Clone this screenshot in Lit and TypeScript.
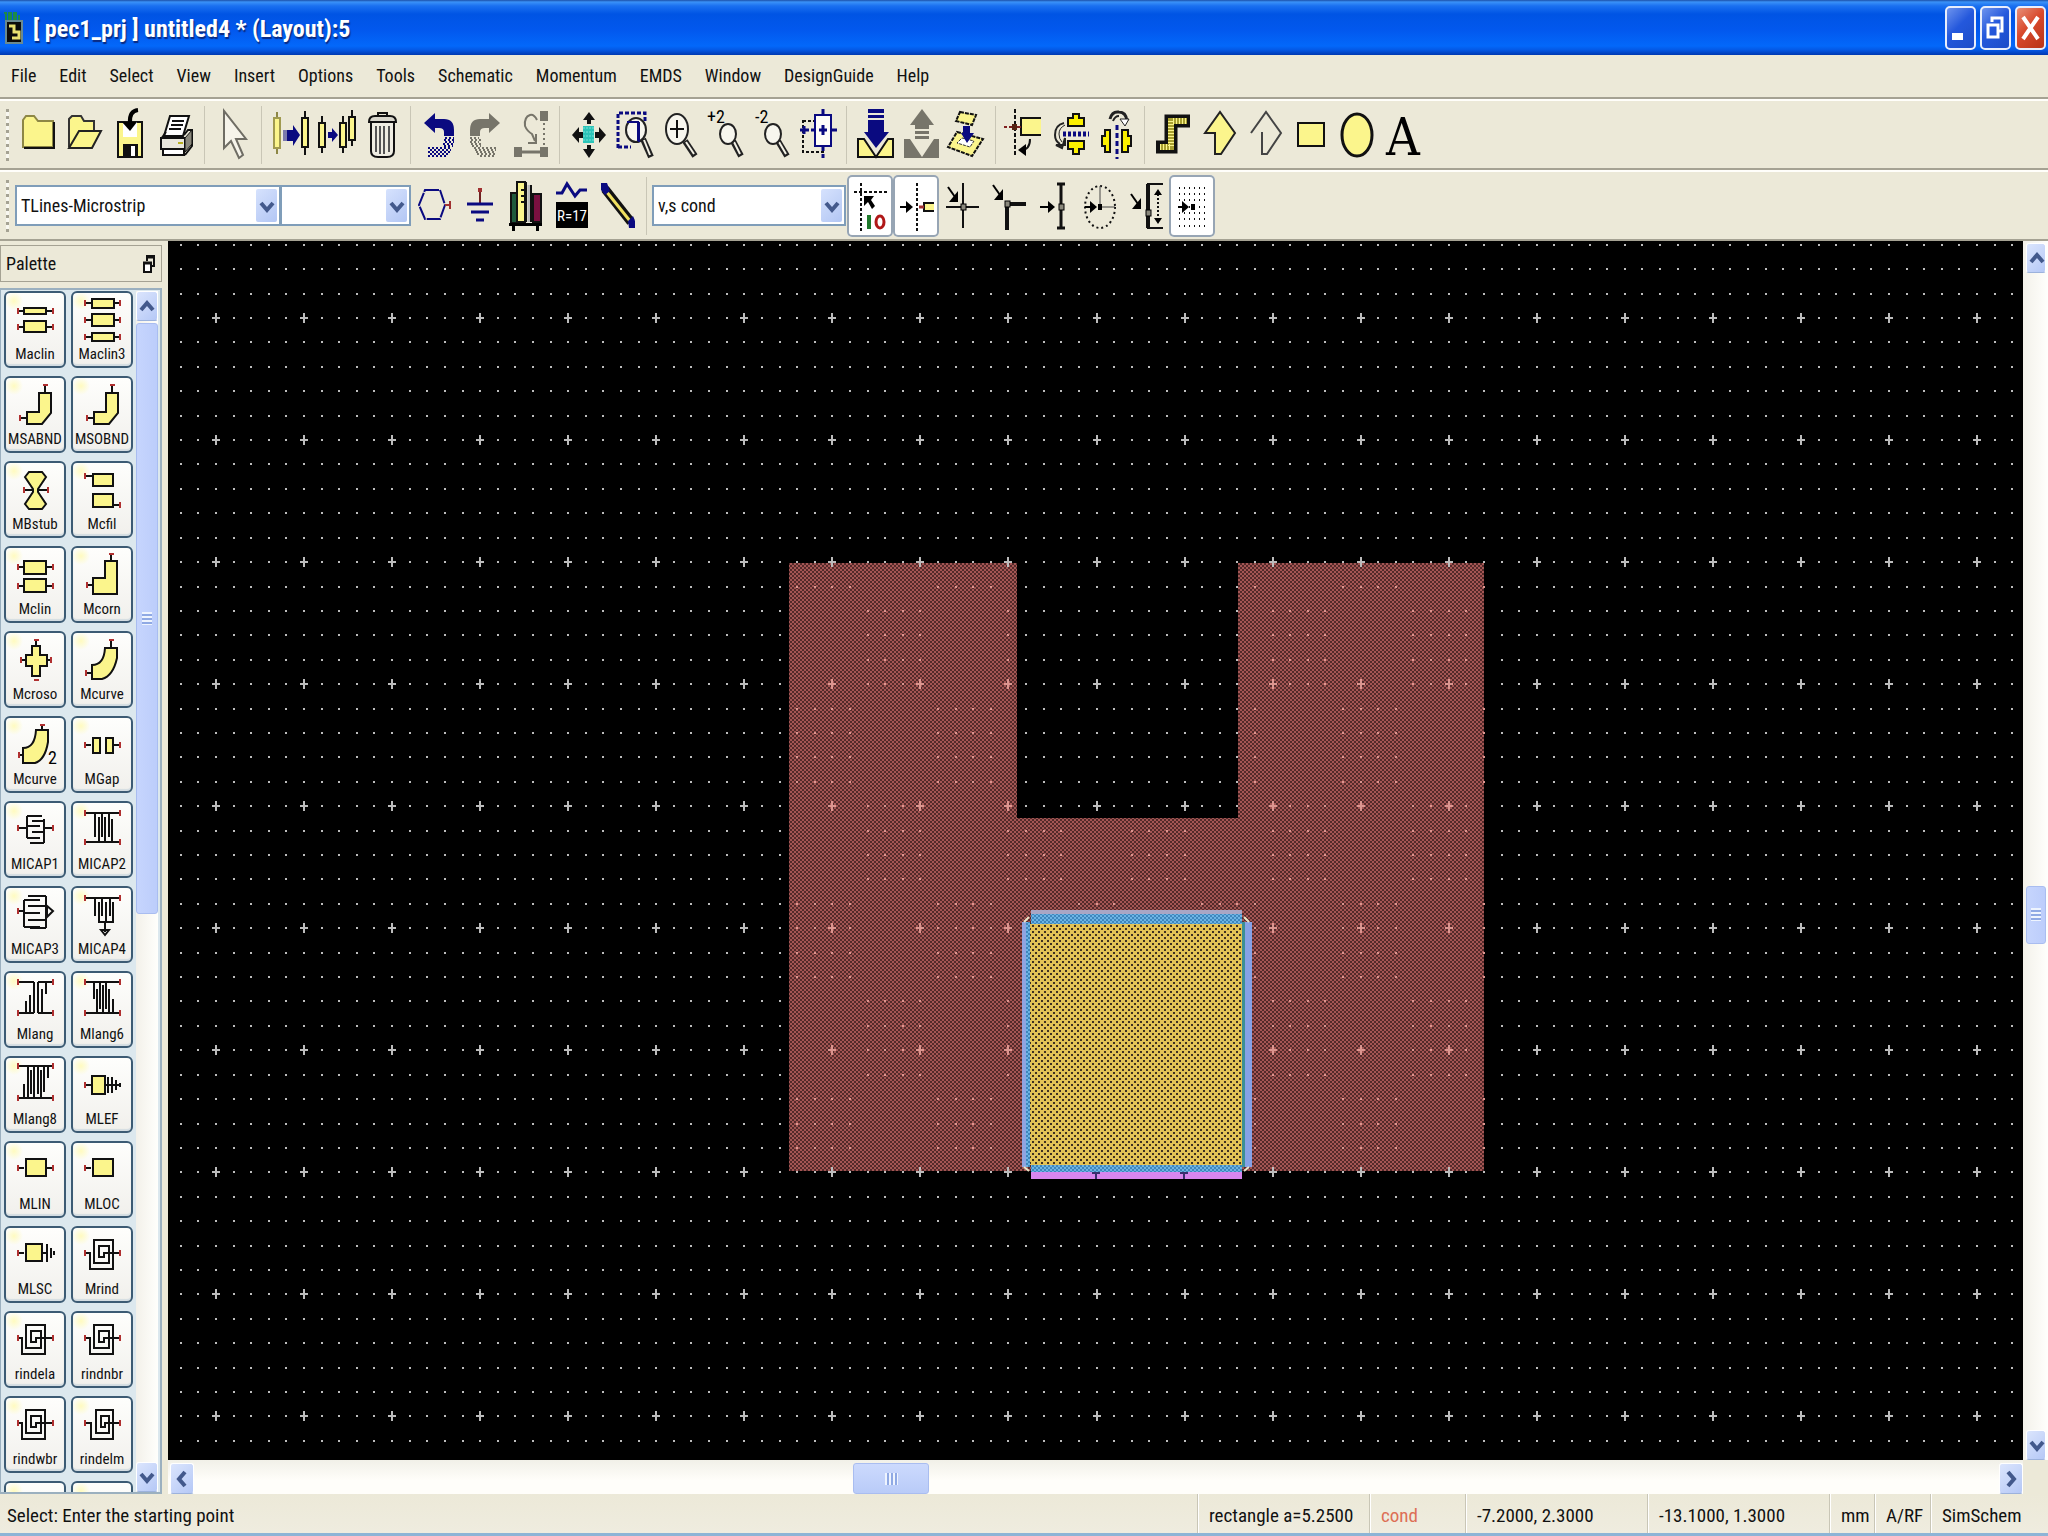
import { LitElement, html, svg, css } from "lit";
import { customElement, property } from "lit/decorators.js";

const Y = "#fbf58c";
const N = "#0a0a80";
const G = "#77756a";

/* ---------- toolbar icons, drawn on a 46 x 60 field ---------- */
const lens = (cx: number, cy: number, rx: number, ry: number, hx: number, hy: number) => svg`
  <path d="M${cx + rx - 3} ${cy + ry - 3} L${hx} ${hy}" stroke="#222" stroke-width="6"/>
  <path d="M${cx + rx - 2} ${cy + ry - 2} L${hx - 1} ${hy - 2}" stroke="#f4f2e6" stroke-width="2"/>
  <ellipse cx=${cx} cy=${cy} rx=${rx} ry=${ry} fill="#f7f6ee" stroke="#222" stroke-width="2"/>`;
const arrowR = (x: number, y: number, len: number) => svg`
  <path d="M${x} ${y} h${len - 6}" stroke="#000" stroke-width="2"/>
  <path d="M${x + len - 7} ${y - 6} v12 l7 -6z" fill="#000"/>`;
const arrowD = (x: number, y: number) => svg`
  <path d="M${x} ${y} l7 10" stroke="#000" stroke-width="2"/>
  <path d="M${x + 10} ${y + 4} v11 h-9z" fill="#000"/>`;
const node = (x: number, y: number) => svg`<rect x=${x - 2} y=${y - 3} width="5" height="6" fill="#8a887c" stroke="#000" stroke-width="1"/>`;

const ICONS: Record<string, unknown> = {
  folder: svg`<path d="M8 42V15l3-4h8l4 5h15v26z" fill=${Y} stroke="#8d8745" stroke-width="2"/><path d="M9 43H39V17" fill="none" stroke="#111" stroke-width="2"/>`,
  open: svg`<path d="M8 42V14l3-3h9l3 5h10v10" fill=${Y} stroke="#333" stroke-width="2"/><path d="M8 43L18 26H40L31 43z" fill=${Y} stroke="#222" stroke-width="2"/>`,
  save: svg`<rect x="11" y="17" width="24" height="35" fill=${Y} stroke="#111" stroke-width="2"/><rect x="16" y="17" width="14" height="15" fill="#fff"/><rect x="16" y="39" width="15" height="13" fill="#111"/><rect x="24" y="41" width="4" height="10" fill="#fff"/><path d="M31 5q-9 1-8 13" fill="none" stroke="#000" stroke-width="4"/><path d="M15 17h15l-7 9z"/>`,
  print: svg`<path d="M17 11H36L30 31H11z" fill="#fff" stroke="#111" stroke-width="2"/><path d="M19 16h12M18 20h12M16 24h12" stroke="#111" stroke-width="2"/><path d="M8 34l5-7M31 30l4-5h4v16l-7 9" fill="none" stroke="#111" stroke-width="2"/><path d="M8 33H32V44H8z" fill="#e9e7dc" stroke="#111" stroke-width="2"/><path d="M32 33l7-8v14l-7 8z" fill="#8a887c" stroke="#111"/><path d="M10 44h21v6H10z" fill="#fff" stroke="#111" stroke-width="2"/><path d="M25 38h5" stroke="#b8b020" stroke-width="2"/>`,
  pointer: svg`<path d="M14 6V43l7-7 8 17 4-3-7-16h10z" fill="#f6f4ea" stroke="#6f6d64" stroke-width="2"/>`,
  swap1: svg`<path d="M10 7V49" stroke="#8d8745" stroke-width="2"/><rect x="7" y="13" width="6" height="30" fill=${Y} stroke="#a09a50" stroke-width="2"/><path d="M17 25v11M19 25v11" stroke=${N}/><path d="M20 25h6v-5l7 10-7 11v-5h-6z" fill=${N}/><path d="M38 6V50" stroke="#111" stroke-width="2"/><rect x="35" y="13" width="6" height="29" fill=${Y} stroke="#111" stroke-width="2"/>`,
  swap2: svg`<path d="M9 11V48M30 11V48M39 5V41" stroke="#111" stroke-width="2"/><rect x="6" y="18" width="6" height="24" fill=${Y} stroke="#111" stroke-width="2"/><rect x="27" y="18" width="6" height="24" fill=${Y} stroke="#111" stroke-width="2"/><rect x="36" y="12" width="6" height="23" fill=${Y} stroke="#111" stroke-width="2"/><path d="M15 27h4v-4l6 7-6 7v-4h-4z" fill=${N}/>`,
  trash: svg`<path d="M19 11V8h9v3" fill="none" stroke="#111" stroke-width="2"/><path d="M10 17q0-6 6-6h15q6 0 6 6z" fill="#d8d6cb" stroke="#111" stroke-width="2"/><path d="M12 17H35V46q0 6-7 6H19q-7 0-7-6z" fill="#efede2" stroke="#111" stroke-width="2"/><path d="M17 21V47M21 21V49M25 21V49M30 21V47" stroke="#555" stroke-width="2"/>`,
  undo: svg`<path d="M8 18L19 8v6h9q10 0 10 11v6H28v-4q0-4-5-4h-4v5z" fill=${N}/><g stroke=${N} stroke-width="2" stroke-dasharray="2 2"><path d="M29 33h9M28 35h10M29 37h9M27 39h11M28 41h9M12 43h24M14 45h21M12 47h22M14 49h18M12 51h18"/></g>`,
  redo: svg`<path d="M38 18L27 8v6h-9q-10 0-10 11v6H18v-4q0-4 5-4h4v5z" fill=${G}/><g stroke=${G} stroke-width="2" stroke-dasharray="2 2"><path d="M8 33h9M9 35h10M8 37h9M9 39h11M10 41h9M12 43h22M13 45h21M14 47h20M15 49h19M18 51h16"/></g>`,
  route: svg`<g fill=${G}><rect x="32" y="6" width="8" height="10"/><rect x="6" y="42" width="8" height="10"/><rect x="32" y="42" width="8" height="10"/></g><path d="M14 47H32" stroke=${G} stroke-width="3"/><path d="M36 18V40" stroke=${G} stroke-width="2" stroke-dasharray="2 3"/><path d="M29 15q-3-6-7-5-6 2-5 11 2 5 7 8l3 7M20 38h8v-9" fill="none" stroke=${G} stroke-width="2"/>`,
  pan: svg`<rect x="18" y="21" width="11" height="17" fill="#2cc4b8"/><path d="M19 22v16M22 22v16M25 22v16M28 22v16" stroke="#79e0d8" stroke-dasharray="2 2"/><path d="M24 7l6 8h-4v4h-4v-4h-4zM24 53l6-9h-4v-4h-4v4h-4zM7 30l7-8v5h4v6h-4v5zM41 30l-7-8v5h-4v6h4v5z" fill="#111"/>`,
  zoomarea: svg`<path d="M7 43V8H34V18M7 42H20" fill="none" stroke=${N} stroke-width="3" stroke-dasharray="4 2"/>${lens(25, 25, 10, 12, 40, 52)}<path d="M16 17h11v19M28 17v20" stroke=${N} stroke-width="2" fill="none"/>`,
  zoomin: svg`${lens(20, 24, 11, 15, 38, 51)}<path d="M20 15V33M13 24H27" stroke="#111" stroke-width="2"/>`,
  zoomx2: svg`<text x="4" y="18" class="t">+2</text>${lens(25, 29, 8, 10, 38, 51)}`,
  zoomd2: svg`<text x="6" y="18" class="t">-2</text>${lens(24, 29, 8, 10, 38, 51)}`,
  center: svg`<rect x="8" y="16" width="20" height="31" fill="none" stroke="#111" stroke-width="2" stroke-dasharray="3 2"/><path d="M5 25h9M9 21v8" stroke=${N} stroke-width="3"/><rect x="20" y="10" width="16" height="31" fill="#fffef8" stroke=${N} stroke-width="2"/><path d="M28 4v6M28 41v5M28 49v4M36 25h6M16 25h4M28 20v10M24 25h8" stroke=${N} stroke-width="3"/>`,
  pushdown: svg`<path d="M6 34H12L24 52 36 34H41V52H6z" fill=${Y} stroke="#111" stroke-width="2"/><path d="M16 4H32v4H16zM16 10H32v3H16zM16 15H32v12h5L24 43 12 27h4z" fill=${N}/>`,
  popup: svg`<path d="M6 34H12L24 52 36 34H41V53H6z" fill=${G}/><path d="M24 4L36 20H31v4H17v-4H12zM17 26H31v3H17zM17 31H31v3H17z" fill=${G}/>`,
  layers: svg`<path d="M16 7l16 3-4 10-16-4z" fill=${Y} stroke="#111" stroke-width="2" stroke-dasharray="4 1"/><path d="M13 27L39 34 28 51 4 42z" fill=${Y} stroke="#111" stroke-width="2" stroke-dasharray="4 1"/><path d="M18 33l12 3-4 6-13-4z" fill="#fff" stroke="#333" stroke-dasharray="3 1"/><path d="M19 21h7v7h4l-7 10-6-10h2z" fill=${N}/>`,
  rotate: svg`<path d="M14 4V52" stroke="#111" stroke-width="2" stroke-dasharray="4 2"/><path d="M3 22H12" stroke="#802020" stroke-width="2" stroke-dasharray="3 2"/><path d="M40 13H20V30H40z" fill=${Y}/><path d="M40 13H20V30H40" fill="none" stroke="#111" stroke-width="2"/><rect x="11" y="19" width="5" height="6" fill="#521"/><path d="M16 22h4" stroke="#802020" stroke-width="2"/><path d="M29 34q0 11-9 11" fill="none" stroke="#111" stroke-width="2"/><path d="M17 45l8-6v12z"/>`,
  mirrorx: svg`<path d="M21 21V13h5V9h6v4h5v8zM21 36v8h5v5h6v-5h5v-8z" fill="#fbf000" stroke="#111" stroke-width="2"/><path d="M16 29H42" stroke=${N} stroke-width="5" stroke-dasharray="3 2"/><path d="M17 18q-9 2-9 12 0 6 5 9" fill="none" stroke="#222" stroke-width="2"/><path d="M18 20q-6 3-6 9 0 5 3 8" fill="none" stroke="#222"/><path d="M9 40h9V33l-3 10z" stroke="#222" fill="#77756a" stroke-width="2"/>`,
  mirrory: svg`<path d="M17 25H12v6H9v10h3v6h5zM29 25h6v6h3v10h-3v6h-6z" fill="#fbf000" stroke="#111" stroke-width="2"/><path d="M24 20V54" stroke=${N} stroke-width="3" stroke-dasharray="5 3"/><path d="M17 14q2-8 9-7 7 0 8 9" fill="none" stroke="#222" stroke-width="3"/><path d="M20 16q2-5 6-5" fill="none" stroke="#222" stroke-width="2"/><path d="M27 14h9l-4 7z" fill="#fff" stroke="#222"/>`,
  path: svg`<path d="M6 42H21V16H40" fill="none" stroke="#111" stroke-width="13"/><path d="M10 42H21V16H37" fill="none" stroke="#a8a030" stroke-width="6"/><path d="M10 42H21V16H37" fill="none" stroke=${Y} stroke-width="6" stroke-dasharray="1 2"/>`,
  poly: svg`<path d="M9 28L24 7 39 28 25 49H19V28z" fill=${Y} stroke="#222" stroke-width="2"/>`,
  polyline: svg`<path d="M9 28L24 7 39 28 25 49H20V27" fill="none" stroke="#444" stroke-width="2"/>`,
  rect: svg`<rect x="10" y="18" width="26" height="23" fill=${Y} stroke="#111" stroke-width="2"/>`,
  ellipse: svg`<ellipse cx="23" cy="30" rx="15" ry="21" fill=${Y} stroke="#111" stroke-width="3"/>`,
  text: svg`<text x="23" y="50" class="big" text-anchor="middle">A</text>`,

  port: svg`<path d="M14 14H29L34 29 29 43H14L8 29z" fill="none" stroke=${N} stroke-width="2" stroke-dasharray="14 1"/><path d="M34 29H38M39 25V33" stroke="#a03030" stroke-width="2"/>`,
  ground: svg`<path d="M23 14V28" stroke="#702020" stroke-width="2"/><rect x="21" y="12" width="4" height="4" fill="#a03030"/><path d="M10 28H36M14 36H32M19 44H27" stroke=${N} stroke-width="3"/>`,
  books: svg`<rect x="8" y="17" width="6" height="30" fill="#1f5a3c" stroke="#111" stroke-width="2"/><rect x="14" y="6" width="8" height="40" fill=${Y} stroke="#111" stroke-width="2"/><path d="M18 14h4M18 20h4M18 26h4" stroke="#111" stroke-width="2"/><path d="M26 9V46" stroke="#bbb" stroke-width="3"/><path d="M23 6V46M28 9V46" stroke="#111" stroke-width="2"/><rect x="30" y="18" width="8" height="28" fill="#7a1040" stroke="#111" stroke-width="2"/><path d="M6 47H39V50H6zM9 50h3v5h-3zM33 50h3v5h-3z"/>`,
  value: svg`<path d="M7 17h6l5-9 8 12 5-6h7" fill="none" stroke=${N} stroke-width="3"/><rect x="7" y="26" width="32" height="26"/><text x="23" y="45" class="val" text-anchor="middle">R=17</text>`,
  pencil: svg`<path d="M10 13L36 46" stroke="#111" stroke-width="9"/><path d="M11 15L35 45" stroke="#f0e060" stroke-width="3"/><path d="M6 7h6l3 8-5 4-4-5zM40 52h-6l-1-7 5-5 2 5z" fill=${N}/>`,
  snapenable: svg`<path d="M7 16H41M14 7V57" stroke="#111" stroke-width="2" stroke-dasharray="3 2"/><path d="M17 20h10l-3 4 4 6-3 3-4-7-4 4z"/><path d="M22 39V53" stroke="#1f7a2c" stroke-width="4"/><ellipse cx="33" cy="46" rx="4" ry="6" fill="none" stroke="#b01818" stroke-width="3"/>`,
  snappin: svg`<path d="M24 7V56" stroke="#111" stroke-width="2" stroke-dasharray="3 2"/>${arrowR(7, 31, 13)}<rect x="31" y="27" width="10" height="8" fill=${Y}/><path d="M41 27H31V35H41" fill="none" stroke="#111" stroke-width="2"/><path d="M26 31H31" stroke="#a03030" stroke-width="3"/>`,
  snapvertex: svg`<path d="M24 7V52M7 31H40" stroke="#111" stroke-width="2"/>${node(24, 31)}${arrowD(9, 11)}`,
  snapcorner: svg`<path d="M22 54V28H41" stroke="#111" fill="none" stroke-width="4"/>${node(22, 28)}${arrowD(8, 9)}`,
  snapmid: svg`<path d="M30 8V52M26 8H34M26 52H34" stroke="#111" stroke-width="3"/>${node(30, 31)}${arrowR(9, 31, 15)}`,
  snapcenter: svg`<ellipse cx="23" cy="31" rx="15" ry="21" fill="none" stroke="#111" stroke-width="2" stroke-dasharray="2 3"/><path d="M23 10V31H38" stroke="#444" fill="none"/>${arrowR(8, 31, 12)}<rect x="21" y="28" width="4" height="6"/>`,
  snapedge: svg`<path d="M40 8H25V52H40" stroke="#111" fill="none" stroke-width="2"/><path d="M25 8V52" stroke="#111" stroke-width="4"/>${node(25, 37)}${arrowD(8, 18)}<path d="M35 18V44" stroke="#111" stroke-width="2" stroke-dasharray="2 2"/><path d="M35 13l4 6h-8zM35 48l4-6h-8z"/>`,
  snapgrid: svg`${[12, 18, 24, 31, 37, 43, 50].map((y) => svg`<path d="M10 ${y}H38" stroke="#111" stroke-width="2" stroke-dasharray="1 4"/>`)}${arrowR(9, 31, 11)}<rect x="22" y="28" width="4" height="6"/>`,
};

/* ---------- palette icons, drawn on a 58 x 52 field ---------- */
const F = (x: number, y: number, w: number, h: number) => svg`<rect x=${x} y=${y} width=${w} height=${h} fill=${Y} stroke="#111" stroke-width="2"/>`;
const P = (d: string) => svg`<path d=${d} fill=${Y} stroke="#111" stroke-width="2"/>`;
const L = (d: string) => svg`<path d=${d} fill="none" stroke="#111" stroke-width="2"/>`;
const tl = (y: number, to = 18, x = 12) => svg`<path d="M${x} ${y}H${to}" stroke="#111" stroke-width="2"/><path d="M${x} ${y - 3}v6" stroke="#b03030" stroke-width="2"/>`;
const tr = (y: number, from = 40, x = 47) => svg`<path d="M${from} ${y}H${x}" stroke="#111" stroke-width="2"/><path d="M${x} ${y - 3}v6" stroke="#b03030" stroke-width="2"/>`;
const tt = (x: number, to: number, y = 9) => svg`<path d="M${x} ${y}V${to}" stroke="#111" stroke-width="2"/><path d="M${x - 2} ${y}h5" stroke="#b03030" stroke-width="2"/>`;
const spiral = (x = 0, narrow = 0) => svg`${L(`M${13} 27H${17 + x}V43H${40 + x - narrow}V14H${21 + x + narrow}V37H${36 + x - narrow}V20H${26 + x + narrow}V31H${31 + x}V27H46`)}${tl(27, 16)}${tr(27, 42)}`;
const red2 = (y1: number, y2: number) => svg`${tl(y1)}${tr(y1)}${tl(y2)}${tr(y2)}`;

const PALETTE: [string, unknown][] = [
  ["Maclin", svg`${tl(20)}${tr(20)}${tl(36)}${tr(36)}${F(18, 17, 22, 6)}${F(18, 30, 22, 11)}`],
  ["Maclin3", svg`${tl(12)}${tr(12)}${tl(29)}${tr(29)}${tl(46)}${tr(46)}${F(19, 8, 22, 9)}${F(19, 23, 22, 12)}${F(19, 42, 22, 8)}`],
  ["MSABND", svg`${tl(42, 22, 14)}${tt(39, 17)}${P("M33 17H45V37L36 48H21V36H33z")}`],
  ["MSOBND", svg`${tl(42, 22, 14)}${tt(39, 17)}${P("M33 17H45V37L36 48H21V36H33z")}`],
  ["MBstub", svg`${tl(29, 28, 18)}${tr(29, 31, 42)}${P("M19 16L23 11H36L40 16 32 28V31L40 43 36 48H23L19 43 27 31V28z")}`],
  ["Mcfil", svg`${tl(15, 19)}${tr(44)}${F(20, 13, 20, 12)}${F(20, 33, 20, 13)}`],
  ["Mclin", svg`${tl(21)}${tr(21)}${tl(40)}${tr(40)}${F(18, 15, 22, 13)}${F(18, 33, 22, 13)}`],
  ["Mcorn", svg`${tl(39, 20, 14)}${tt(38, 15, 8)}${P("M32 15H44V48H20V32H32z")}`],
  ["Mcroso", svg`${tl(29, 20, 15)}${tr(29, 41, 45)}${tt(30, 14, 9)}${tt(30, 50, 49)}${P("M26 15H34V24H41V35H34V45H26V35H20V24H26z")}`],
  ["Mcurve", svg`${tl(42, 19, 13)}${tt(38, 17, 9)}${P("M32 17H44V27Q40 45 29 48H19V34Q31 34 32 17z")}`],
  ["Mcurve", svg`${tl(39, 18, 13)}${tt(36, 14, 9)}${P("M30 14H42V26Q39 44 29 47H17V32Q29 32 30 14z")}<text x="42" y="48" class="t">2</text>`],
  ["MGap", svg`${tl(29)}${tr(29)}${F(20, 22, 7, 15)}${F(33, 22, 7, 15)}`],
  ["MICAP1", svg`${tl(27, 21)}${tr(27, 38)}${L("M21 15V37M21 15H36M38 18V42M21 25H34M38 20H26M38 31H26M21 37H34M38 42H24")}`],
  ["MICAP2", svg`${red2(12, 41)}${L("M18 12H42M18 41H42M22 12V36M26 16V41M29 12V36M32 16V41M36 12V36M39 18V41")}`],
  ["MICAP3", svg`${tl(25)}${L("M18 14V41M22 10H40M40 10V42M18 14H34M40 20H22M18 27H34M40 34H22M18 41H34M24 42H40M41 20V31L47 25z")}`],
  ["MICAP4", svg`${tl(12)}${tr(12)}${L("M18 12H42M22 12V30M26 16V36M29 12V30M33 16V36M37 12V30M40 16V36M25 36H41M32 36V46M28 44H36L32 49z")}`],
  ["Mlang", svg`${red2(11, 42)}${L("M18 11H28M32 11H42M18 42H28M32 42H42M20 42V30M24 24V42M28 11V42M32 11V42M36 42V18M40 11V23")}`],
  ["Mlang6", svg`${red2(11, 42)}${L("M18 11H42M18 42H42M21 11V28M24 42V18M27 11V38M30 42V14M33 11V38M36 42V18M40 42V28")}`],
  ["Mlang8", svg`${red2(10, 42)}${L("M18 10H42M18 42H42M18 42V28M22 10V42M25 14V38M28 10V42M32 10V38M35 42V14M38 10V36M42 10V22")}`],
  ["MLEF", svg`${tl(29)}${F(19, 20, 13, 18)}${L("M32 29H46M35 21V37M39 21V37M43 24V34M47 27V31")}`],
  ["MLIN", svg`${tl(27)}${tr(27)}${F(20, 18, 20, 17)}`],
  ["MLOC", svg`${tl(27)}${F(20, 18, 20, 17)}`],
  ["MLSC", svg`${tl(27)}${F(20, 18, 16, 17)}${L("M36 27H41M41 18V36M45 22V32M48 25V29")}`],
  ["Mrind", spiral()],
  ["rindela", spiral(-1)],
  ["rindnbr", spiral()],
  ["rindwbr", spiral(-1)],
  ["rindelm", spiral(1, 1)],
  ["", null],
  ["", null],
];

const TOOLBAR: string[][] = [
  ["folder", "open", "save", "print"],
  ["pointer"],
  ["swap1", "swap2", "trash"],
  ["undo", "redo", "route"],
  ["pan", "zoomarea", "zoomin", "zoomx2", "zoomd2", "center"],
  ["pushdown", "popup", "layers"],
  ["rotate", "mirrorx", "mirrory"],
  ["path", "poly", "polyline", "rect", "ellipse", "text"],
];
const MENUS = ["File", "Edit", "Select", "View", "Insert", "Options", "Tools", "Schematic", "Momentum", "EMDS", "Window", "DesignGuide", "Help"];

const chevron = (dir: "up" | "down" | "left" | "right") => {
  const d = { up: "M4 14L10 7 16 14", down: "M4 7L10 14 16 7", left: "M13 3L7 10 13 17", right: "M7 3L13 10 7 17" }[dir];
  return html`<svg width="20" height="20" viewBox="0 0 20 20"><path d=${d} fill="none" stroke="#43598c" stroke-width="4"/></svg>`;
};

/* ---------- scroll bar ---------- */
@customElement("scroll-strip")
class ScrollStrip extends LitElement {
  @property({ type: Boolean, reflect: true }) horizontal = false;
  @property({ type: Number }) before = 0;
  @property({ type: Number }) size = 10;
  static styles = css`
    :host { display: flex; flex-direction: column; gap: 2px; background: linear-gradient(90deg, #f3f1ea, #fffffc); min-width: 0; min-height: 0; }
    :host([horizontal]) { flex-direction: row; background: linear-gradient(#f1f0e8, #fffefa 60%); }
    button { flex: none; height: 30px; padding: 0; border: 1px solid #fff; border-bottom-color: #9cb2dc; border-radius: 3px; background: linear-gradient(135deg, #dbe5fd, #b5c8f6); display: grid; place-items: center; }
    :host([horizontal]) button { width: 24px; height: auto; }
    .track { flex: 1; display: flex; flex-direction: inherit; min-height: 0; min-width: 0; }
    .thumb { flex: none; box-sizing: border-box; border: 1px solid #a9bdf0; border-radius: 3px; background: linear-gradient(90deg, #c6d5fd, #bccdfb); display: grid; place-items: center; }
    :host([horizontal]) .thumb { background: linear-gradient(#ccdafd, #b9cbf8); }
    .grip { width: 10px; height: 13px; background: repeating-linear-gradient(#eef4fe 0 2px, #8fa9e4 2px 4px); }
    :host([horizontal]) .grip { width: 13px; height: 12px; background: repeating-linear-gradient(90deg, #eef4fe 0 2px, #8fa9e4 2px 4px); }
  `;
  render() {
    const axis = this.horizontal ? "width" : "height";
    return html`
      <button aria-label=${this.horizontal ? "Scroll left" : "Scroll up"}>${chevron(this.horizontal ? "left" : "up")}</button>
      <div class="track"><div style="${axis}:${this.before}%"></div><div class="thumb" style="${axis}:${this.size}%"><div class="grip"></div></div></div>
      <button aria-label=${this.horizontal ? "Scroll right" : "Scroll down"}>${chevron(this.horizontal ? "right" : "down")}</button>`;
  }
}

/* ---------- layout canvas ---------- */
@customElement("layout-canvas")
class LayoutCanvas extends LitElement {
  static styles = css`
    :host { display: block; background: #000; overflow: hidden; min-width: 0; min-height: 0; position: relative; }
    svg { position: absolute; inset: 0; width: 100%; height: 100%; display: block; }
  `;
  private grid() {
    const out: string[] = [];
    const pink: string[] = [];
    const inside = (x: number, y: number) =>
      x > 621 && x < 1316 && y > 322 && y < 930 && !(x > 848 && x < 1070 && y < 577) && !(x > 853 && x < 1085 && y > 666);
    const inPatch = (x: number, y: number) => x > 853 && x < 1085 && y > 666 && y < 938;
    for (let j = -3; j < 47; j++) {
      const y = Math.round(76 + j * 24.41);
      for (let i = -2; i < 103; i++) {
        const x = Math.round(47 + i * 17.61);
        if (inPatch(x, y)) continue;
        const major = i % 5 === 0 && j % 5 === 0;
        if (inside(x, y)) {
          const lit = (Math.floor((i + (i > 50 ? 4 : 3)) / 4) + Math.floor(j / 4)) & 1;
          if (major) pink.push(`M${x - 3} ${y}h8v2h-8zM${x} ${y - 4}h2v10h-2z`);
          else if (lit) pink.push(`M${x} ${y}h2v2h-2z`);
        } else out.push(major ? `M${x - 3} ${y}h8v2h-8zM${x} ${y - 4}h2v10h-2z` : `M${x} ${y}h2v2h-2z`);
      }
    }
    return [out.join(""), pink.join("")];
  }
  render() {
    const [white, pink] = this.grid();
    return html`<svg aria-label="Layout drawing" role="img">
      <defs>
        <pattern id="cond" width="4" height="4" patternUnits="userSpaceOnUse"><rect width="4" height="4" fill="#542a2a"/><path d="M0 0h2v2h-2zM2 2h2v2h-2z" fill="#a45654"/></pattern>
        <pattern id="gold" width="6" height="6" patternUnits="userSpaceOnUse"><rect width="6" height="6" fill="#e3c256"/><path d="M0 0h2v2h-2zM3 3h2v2h-2z" fill="#3f2f20"/></pattern>
        <pattern id="blue" width="4" height="4" patternUnits="userSpaceOnUse"><rect width="4" height="4" fill="#6cb4e4"/><path d="M0 0h2v2h-2zM2 2h2v2h-2z" fill="#3f86bc"/></pattern>
      </defs>
      <path d="M621 322H849V577H1070V322H1316V930H621z" fill="url(#cond)"/>
      <path d=${white} fill="#bcbcbc"/>
      <path d=${pink} fill="#dc9690"/>
      <rect x="862" y="682" width="213" height="242" fill="url(#gold)"/>
      <rect x="863" y="669" width="211" height="4" fill="#a9a6c4"/>
      <rect x="863" y="673" width="211" height="10" fill="url(#blue)"/>
      <rect x="854" y="681" width="4" height="245" fill="#8fa4e0"/>
      <rect x="858" y="681" width="4" height="245" fill="url(#blue)"/>
      <rect x="1074" y="681" width="4" height="245" fill="#3b9096"/>
      <rect x="1077" y="681" width="7" height="245" fill="#86a2e6"/>
      <path d="M856 681l5-5M1076 676l5 5M856 926l5 4M1076 930l5-4" stroke="#ece6c8" stroke-width="2"/>
      <rect x="863" y="924" width="211" height="7" fill="url(#blue)"/>
      <rect x="863" y="931" width="211" height="7" fill="#d786ee"/>
      <path d="M924 931h8v2h-8zM927 931h2v7h-2zM1012 931h8v2h-8zM1015 931h2v7h-2z" fill="#3a2f70"/>
    </svg>`;
  }
}

@customElement("app-root")
class AppRoot extends LitElement {
  static styles = css`
    :host { display: flex; flex-direction: column; height: 100vh; overflow: hidden; background: #ece9d8; color: #111; font-family: "Roboto Condensed", Roboto, "Liberation Sans", sans-serif; font-size: 18px; line-height: 24px; }
    * { box-sizing: border-box; }
    button, select { font: inherit; color: inherit; }
    .title { flex: none; height: 55px; display: flex; align-items: center; padding: 0 2px 0 4px; background: linear-gradient(#1c50a8 0, #3a92f8 2px, #1a70f0 6px, #0054e4 14px, #0258ee 30px, #0368fa 46px, #0458e4 50px, #0038b0 55px); color: #fff; }
    h1 { flex: 1; margin: 0 0 0 9px; padding-top: 2px; font-size: 24px; line-height: 30px; font-weight: bold; text-shadow: 1px 2px 1px #0a2a80; white-space: pre; }
    .caps { display: flex; gap: 4px; }
    .caps button { width: 31px; height: 44px; padding: 0; border: 2px solid #e8eefc; border-radius: 5px; background: linear-gradient(135deg, #6e94ee, #2458dc 45%, #1c4cc8); }
    .caps .close { background: linear-gradient(135deg, #e89078, #d8492c 45%, #b83418); }
    .caps svg, .tool svg, .glyph { display: block; }
    nav { flex: none; height: 44px; display: flex; align-items: center; gap: 23px; padding: 0 11px; border-bottom: 2px solid #a5a293; }
    nav a { color: #111; text-decoration: none; }
    .bar { flex: none; height: 71px; display: flex; align-items: center; padding-left: 6px; border-top: 2px solid #fffefa; border-bottom: 2px solid #a5a293; }
    .grab { width: 3px; height: 52px; background: repeating-linear-gradient(#a5a293 0 3px, #f8f7f0 3px 7px); margin-right: 6px; }
    .group { display: flex; }
    .sep { width: 1px; height: 58px; background: #c9c6b6; margin: 0 5px; }
    .tool { width: 46px; height: 62px; padding: 0; border: 0; background: none; }
    .tool svg { overflow: visible; }
    .on { background: #fff; box-shadow: inset 0 0 0 2px #97a5b4; border-radius: 5px; }
    .t { font-size: 18px; }
    .big { font-family: "DejaVu Serif Condensed", "DejaVu Serif", serif; font-size: 52px; }
    .val { font-size: 15px; fill: #fff; }
    .combo { display: grid; grid-template-columns: 1fr auto; height: 41px; border: 2px solid #7f9db9; background: #fff; }
    .combo select { grid-area: 1 / 1 / 2 / 3; appearance: none; border: 0; background: none; padding: 0 26px 0 4px; min-width: 0; width: 100%; }
    .combo .arrow { grid-area: 1 / 2; width: 21px; margin: 2px; background: linear-gradient(135deg, #d6e2fd, #b2c6f4); border-radius: 2px; display: grid; place-items: center; pointer-events: none; }
    .family { width: 266px; }
    .part { width: 131px; margin-left: -1px; }
    .layer { width: 194px; margin-right: 1px; }
    main { flex: 1; min-height: 0; display: grid; grid-template-columns: 168px minmax(0, 1fr) 25px; grid-template-rows: minmax(0, 1fr) 34px; }
    aside { grid-row: 1 / 3; display: flex; flex-direction: column; padding: 4px 6px 0 0; gap: 6px; min-height: 0; }
    .head { flex: none; height: 37px; display: flex; align-items: center; justify-content: space-between; border: 1px solid #a5a293; padding: 0 5px; }
    .head button { width: 14px; height: 20px; padding: 0; border: 0; background: none; }
    .panel { flex: 1; min-height: 0; display: grid; grid-template-columns: 134px 22px; gap: 1px; border: 2px solid #9bb0bf; border-left-width: 1px; background: #dce8ee; padding: 0 1px 0 0; }
    .parts { overflow: hidden; display: grid; grid-template-columns: 62px 62px; grid-auto-rows: 77px; gap: 8px 5px; padding: 1px 0 0 3px; align-content: start; }
    .parts button { display: flex; flex-direction: column; align-items: center; gap: 1px; padding: 0; border: 2px solid #3c5b74; border-radius: 6px; background: radial-gradient(circle at 8px 8px, #fffbc0 0, #fffbc000 9px), linear-gradient(#fefefc, #f1f0ec); font-size: 15px; line-height: 20px; overflow: hidden; white-space: nowrap; box-shadow: inset 0 -2px 1px #d4dde2; }
    .panel scroll-strip { margin-top: 1px; }
    .vs { padding: 2px 2px 0 3px; }
    .hs { padding: 3px 0 0 2px; }
    .corner { background: #ece9d8; }
    footer { flex: none; height: 42px; display: flex; align-items: stretch; border-bottom: 3px solid #8db4d6; background: linear-gradient(#ece9d8, #efecdf); font-size: 19px; }
    footer span { display: flex; align-items: center; padding: 5px 0 0 11px; border-left: 1px solid #c9c6b6; box-shadow: inset 1px 0 0 #fff; white-space: nowrap; }
    footer .msg { flex: 1; padding-left: 7px; border: 0; box-shadow: none; }
    .w1 { width: 172px; } .w2 { width: 96px; } .w3 { width: 182px; } .w4 { width: 45px; } .w5 { width: 56px; } .w6 { width: 118px; }
    footer .cond { color: #dd6e55; }
  `;
  private tool(name: string, on = false) {
    return html`<button class="tool ${on ? "on" : ""}" aria-label=${name}><svg width="46" height="60" viewBox="0 0 46 60">${ICONS[name]}</svg></button>`;
  }
  private combo(cls: string, label: string, value: string) {
    return html`<div class="combo ${cls}"><select aria-label=${label}><option>${value}</option></select><span class="arrow">${chevron("down")}</span></div>`;
  }
  render() {
    return html`
      <header class="title">
        <svg class="glyph" width="20" height="36" viewBox="0 0 20 36"><path d="M0 3h2v8h3V3h2v8h3V3h2v8h3V5" stroke="#1d8a4a" stroke-width="2" fill="none"/><rect x="2" y="11" width="16" height="22" fill="#0b0b0b" stroke="#6a8a90" stroke-width="2"/><path d="M5 16h5v6h5v6H8" stroke="#e8e070" stroke-width="3" fill="none"/></svg>
        <h1>[ pec1_prj ] untitled4 * (Layout):5</h1>
        <div class="caps">
          <button aria-label="Minimize"><svg width="27" height="40" viewBox="0 0 27 40"><rect x="5" y="25" width="11" height="7" fill="#fff"/></svg></button>
          <button aria-label="Restore"><svg width="27" height="40" viewBox="0 0 27 40"><path d="M10 14V10H20V23H17" fill="none" stroke="#fff" stroke-width="3"/><rect x="6" y="17" width="10" height="12" fill="none" stroke="#fff" stroke-width="3"/></svg></button>
          <button class="close" aria-label="Close"><svg width="27" height="40" viewBox="0 0 27 40"><path d="M6 9L21 31M21 9L6 31" stroke="#fff" stroke-width="4"/></svg></button>
        </div>
      </header>
      <nav>${MENUS.map((m) => html`<a href="#">${m}</a>`)}</nav>
      <div class="bar" role="toolbar" aria-label="Standard">
        <div class="grab"></div>
        ${TOOLBAR.map((g, i) => html`${i ? html`<div class="sep"></div>` : ""}<div class="group">${g.map((n) => this.tool(n))}</div>`)}
      </div>
      <div class="bar" role="toolbar" aria-label="Components">
        <div class="grab"></div>
        <div class="group">${this.combo("family", "Component library", "TLines-Microstrip")}${this.combo("part", "Component", "")}</div>
        <div class="group">${["port", "ground", "books", "value", "pencil"].map((n) => this.tool(n))}</div>
        <div class="sep"></div>
        ${this.combo("layer", "Entry layer", "v,s cond")}
        <div class="group">
          ${this.tool("snapenable", true)}${this.tool("snappin", true)}
          ${["snapvertex", "snapcorner", "snapmid", "snapcenter", "snapedge"].map((n) => this.tool(n))}
          ${this.tool("snapgrid", true)}
        </div>
      </div>
      <main>
        <aside>
          <div class="head"><span>Palette</span><button aria-label="Undock palette"><svg width="14" height="20" viewBox="0 0 14 20"><path d="M5 7V2H12V12H9" fill="none" stroke="#111" stroke-width="2"/><path d="M4 3H13" stroke="#111" stroke-width="3"/><rect x="2" y="9" width="7" height="9" fill="#fff" stroke="#111" stroke-width="2"/><path d="M1 9H10" stroke="#111" stroke-width="3"/></svg></button></div>
          <div class="panel">
            <div class="parts">${PALETTE.map(([name, icon]) => html`<button aria-label=${name || "More"}><svg class="glyph" width="58" height="50" viewBox="0 2 58 50">${icon}</svg>${name}</button>`)}</div>
            <scroll-strip .before=${0} .size=${52}></scroll-strip>
          </div>
        </aside>
        <layout-canvas></layout-canvas>
        <scroll-strip class="vs" .before=${53} .size=${5}></scroll-strip>
        <scroll-strip class="hs" horizontal .before=${36.5} .size=${4.2}></scroll-strip>
        <div class="corner"></div>
      </main>
      <footer>
        <span class="msg">Select: Enter the starting point</span>
        <span class="w1">rectangle a=5.2500</span><span class="w2 cond">cond</span><span class="w3">-7.2000, 2.3000</span><span class="w3">-13.1000, 1.3000</span><span class="w4">mm</span><span class="w5">A/RF</span><span class="w6">SimSchem</span>
      </footer>`;
  }
}
